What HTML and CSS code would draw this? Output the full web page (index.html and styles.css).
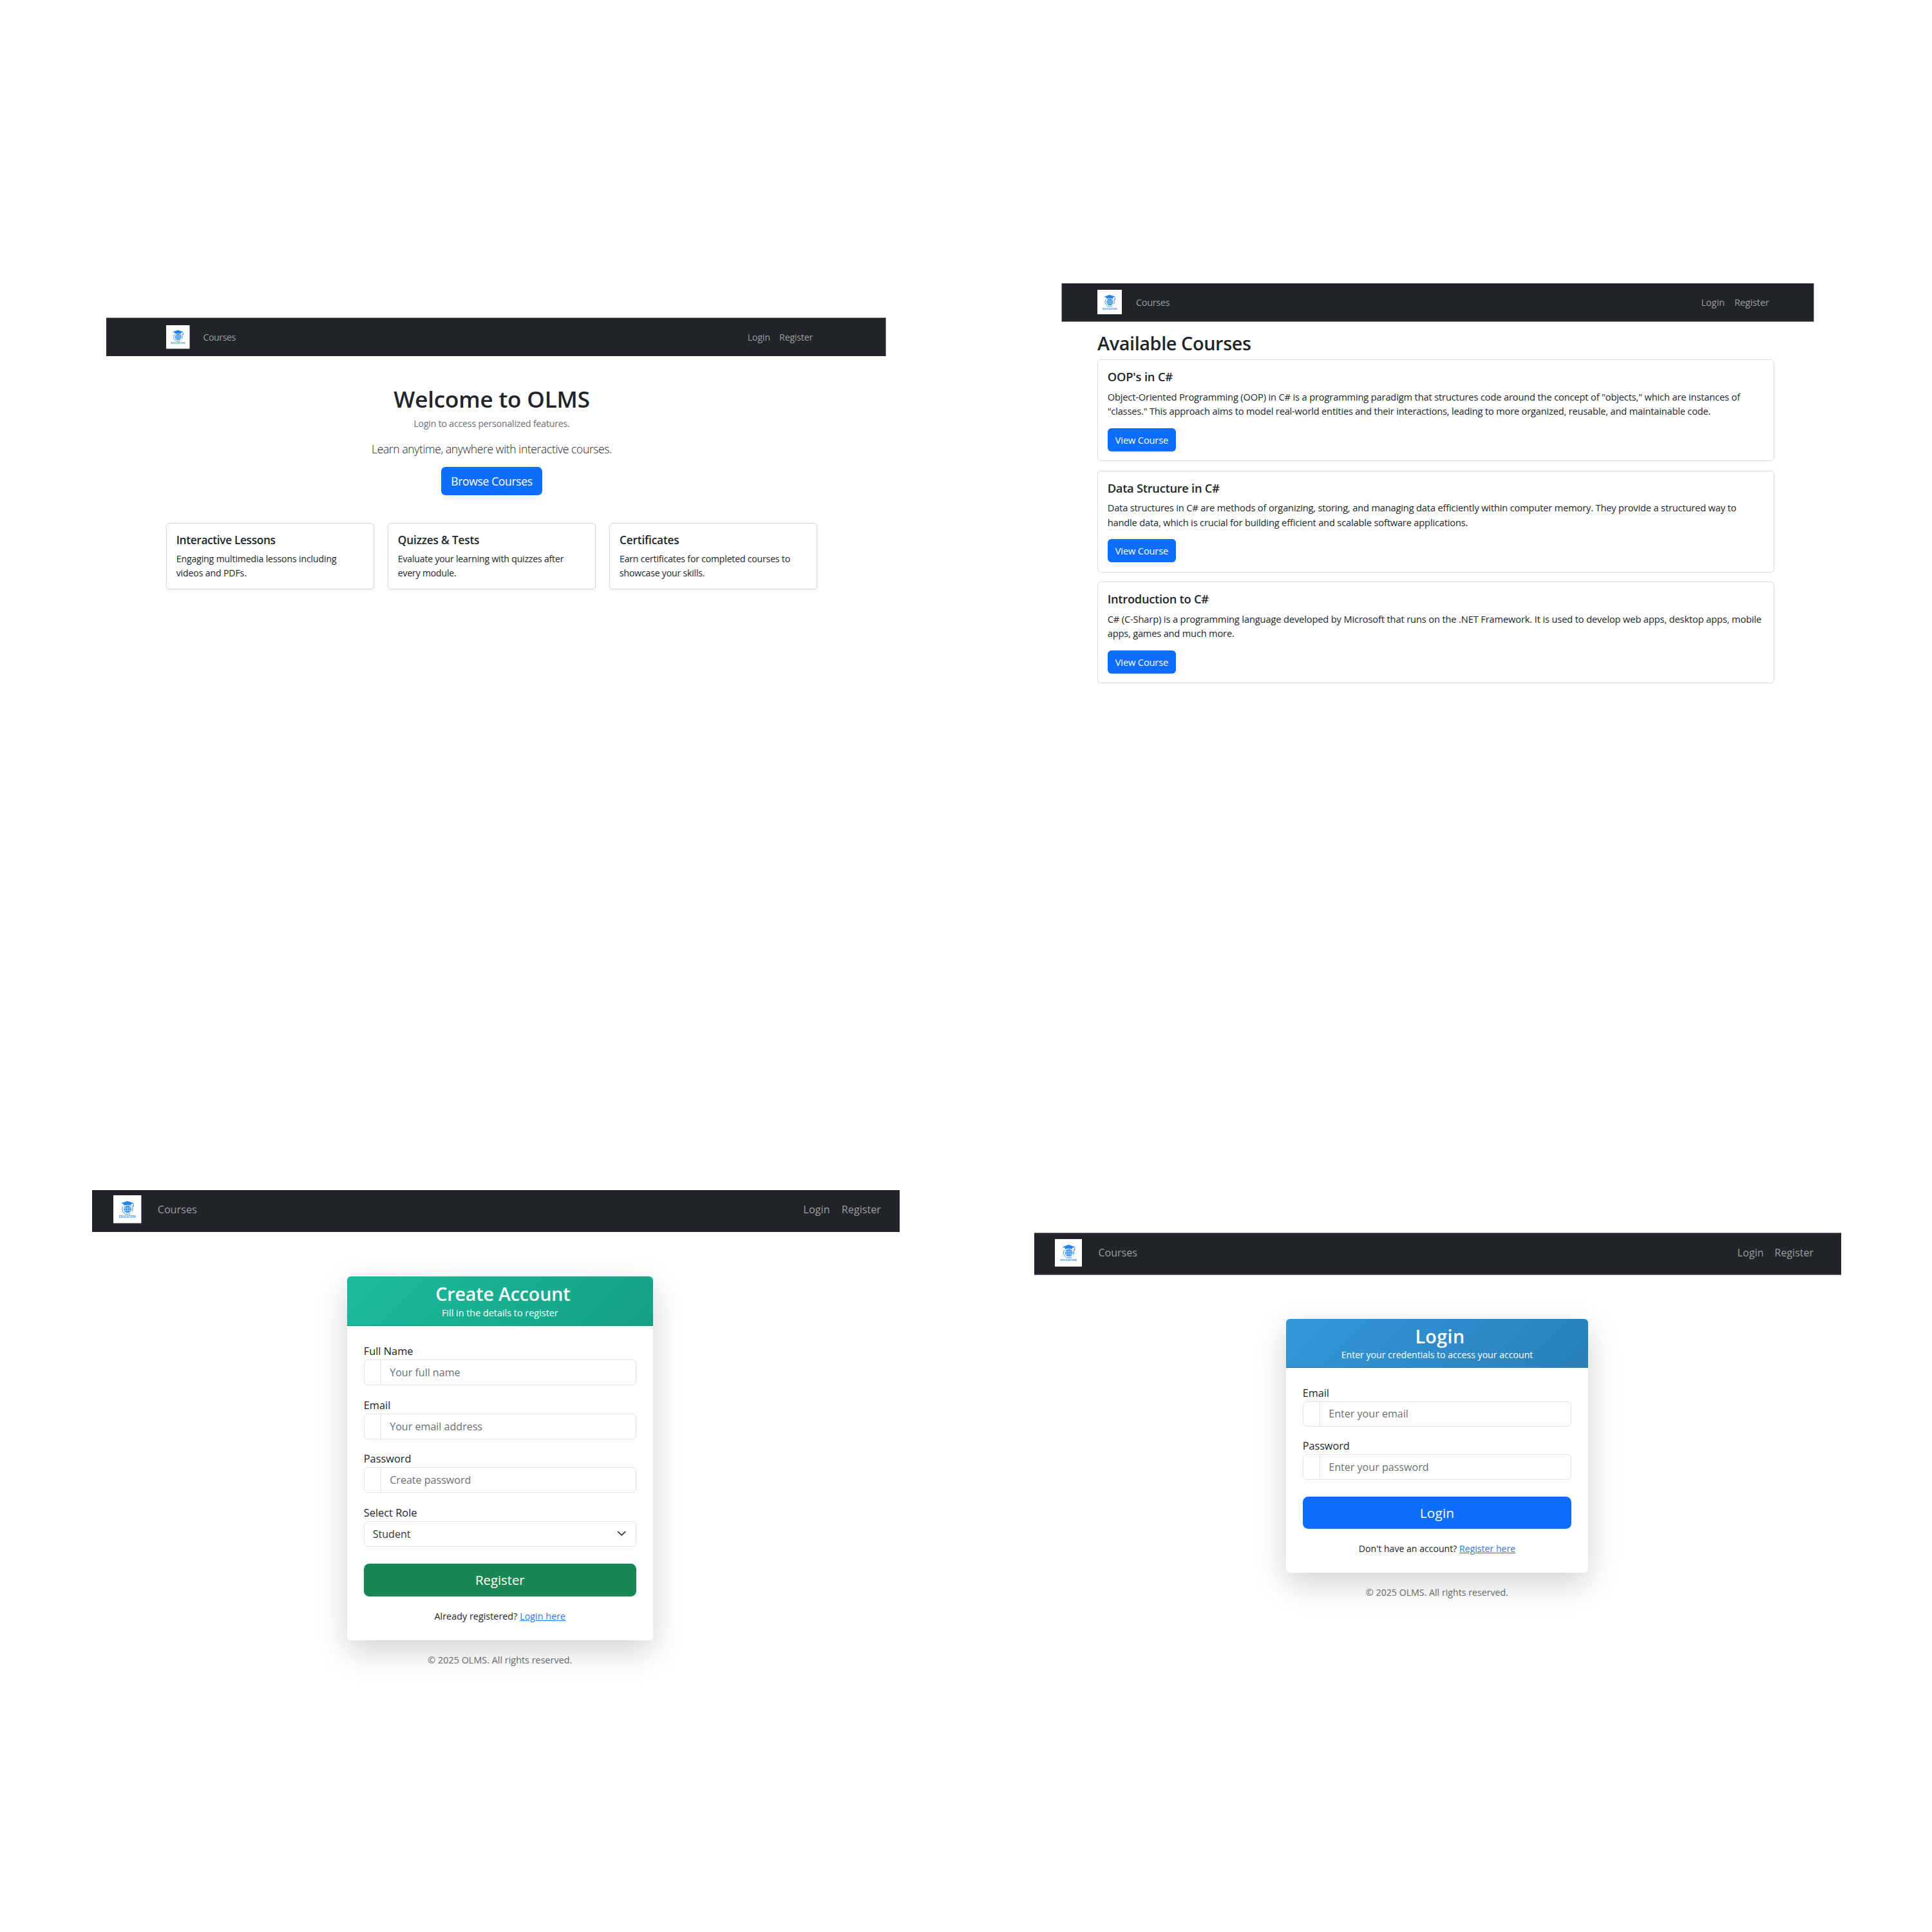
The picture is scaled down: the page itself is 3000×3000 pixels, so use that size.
FILE: index.html
```html
<!DOCTYPE html>
<html lang="en">
<head>
<meta charset="utf-8">
<title>OLMS</title>
<link rel="stylesheet" href="styles.css">
</head>
<body>
<main class="board">
  <section class="screen home">
    <nav class="navbar">
      <svg class="logo" viewBox="0 0 40 40">
        <g id="logo">
          <rect width="40" height="40" fill="#fff"/>
          <g fill="none" stroke="#2483f0">
            <circle cx="20.4" cy="20" r="5.4" fill="#2483f0" stroke="none"/>
            <path d="M20.4 15v10.400M18.100 15.600c-1 3-1 6.500 0 9.300M22.700 15.600c1 3 1 6.500 0 9.300M15 18.500h11M15 21.700h11" stroke="#fff" stroke-width=".55"/>
            <path d="M13.900 15.600c-2.400 4.200-1 9.400 3.400 11.200 3 1.200 5.600.3 7.200-1M26.800 15.800c1.300 2.600 1.200 5.300-.2 7.600" stroke-width=".9"/>
            <path d="M28.800 12v3" stroke-width=".7"/>
          </g>
          <path fill="#2483f0" d="M20 8.200l9.500 3.200-4.300 1.500v2c-3-1.300-7-1.300-10.200 0v-2l-4-1.500zM28.100 14.500h1.400l.2 1.900h-1.800z"/>
          <text x="8" y="32.300" textLength="24" lengthAdjust="spacingAndGlyphs" font-size="4" font-weight="700" fill="#3a90f2">EDUCATION</text>
        </g>
      </svg>
      <a class="nav-courses">Courses</a>
      <a class="nav-login">Login</a>
      <a class="nav-register">Register</a>
    </nav>
    <div class="content">
      <h1>Welcome to OLMS</h1>
      <p class="hint">Login to access personalized features.</p>
      <p class="lead">Learn anytime, anywhere with interactive courses.</p>
      <a class="btn">Browse Courses</a>
      <div class="features">
        <article class="card">
          <h5 class="tight">Interactive Lessons</h5>
          <p class="loose">Engaging multimedia lessons including<br>videos and PDFs.</p>
        </article>
        <article class="card">
          <h5>Quizzes &amp; Tests</h5>
          <p>Evaluate your learning with quizzes after<br>every module.</p>
        </article>
        <article class="card">
          <h5>Certificates</h5>
          <p>Earn certificates for completed courses to<br>showcase your skills.</p>
        </article>
      </div>
    </div>
  </section>

  <section class="screen courses">
    <nav class="navbar">
      <svg class="logo" viewBox="0 0 40 40"><use href="#logo"/></svg>
      <a class="nav-courses">Courses</a>
      <a class="nav-login">Login</a>
      <a class="nav-register">Register</a>
    </nav>
    <div class="content">
      <h2>Available Courses</h2>
      <article class="card">
        <h5 class="loose">OOP's in C#</h5>
        <p>Object-Oriented Programming (OOP) in C# is a programming paradigm that structures code around the concept of "objects," which are instances of<br><span class="tight">"classes." This approach aims to model real-world entities and their interactions, leading to more organized, reusable, and maintainable code.</span></p>
        <a class="btn">View Course</a>
      </article>
      <article class="card">
        <h5>Data Structure in C#</h5>
        <p class="mid">Data structures in C# are methods of organizing, storing, and managing data efficiently within computer memory. They provide a structured way to<br>handle data, which is crucial for building efficient and scalable software applications.</p>
        <a class="btn">View Course</a>
      </article>
      <article class="card">
        <h5>Introduction to C#</h5>
        <p class="loose">C# (C-Sharp) is a programming language developed by Microsoft that runs on the .NET Framework. It is used to develop web apps, desktop apps, mobile<br><span class="tight">apps, games and much more.</span></p>
        <a class="btn">View Course</a>
      </article>
    </div>
  </section>

  <section class="screen register">
    <nav class="navbar">
      <svg class="logo" viewBox="0 0 40 40"><use href="#logo"/></svg>
      <a class="nav-courses">Courses</a>
      <a class="nav-login">Login</a>
      <a class="nav-register">Register</a>
    </nav>
    <div class="form-card">
      <header>
        <h3>Create Account</h3>
        <p>Fill in the details to register</p>
      </header>
      <form>
        <label>Full Name</label>
        <div class="field"><i></i><span>Your full name</span></div>
        <label>Email</label>
        <div class="field"><i></i><span>Your email address</span></div>
        <label>Password</label>
        <div class="field"><i></i><span>Create password</span></div>
        <label>Select Role</label>
        <div class="field select"><span>Student</span>
          <svg class="chevron" viewBox="0 0 16 16"><path d="m2 5 6 6 6-6" fill="none" stroke="#343a40" stroke-width="2" stroke-linecap="round" stroke-linejoin="round"/></svg>
        </div>
        <div class="submit success">Register</div>
        <p class="switch">Already registered? <a>Login here</a></p>
      </form>
    </div>
    <footer>© 2025 OLMS. All rights reserved.</footer>
  </section>

  <section class="screen login">
    <nav class="navbar">
      <svg class="logo" viewBox="0 0 40 40"><use href="#logo"/></svg>
      <a class="nav-courses">Courses</a>
      <a class="nav-login">Login</a>
      <a class="nav-register">Register</a>
    </nav>
    <div class="form-card">
      <header>
        <h3>Login</h3>
        <p>Enter your credentials to access your account</p>
      </header>
      <form>
        <label>Email</label>
        <div class="field"><i></i><span>Enter your email</span></div>
        <label>Password</label>
        <div class="field"><i></i><span>Enter your password</span></div>
        <div class="submit">Login</div>
        <p class="switch">Don't have an account? <a>Register here</a></p>
      </form>
    </div>
    <footer>© 2025 OLMS. All rights reserved.</footer>
  </section>
</main>
</body>
</html>
```
FILE: styles.css
```css
* { box-sizing: border-box; margin: 0; padding: 0; }
body {
  width: 3000px;
  background: #fff;
  color: #212529;
  font-family: "Open Sans", "Noto Sans", sans-serif;
  white-space: nowrap;
}
.board {
  display: grid;
  grid-template-columns: 1500px 1500px;
  grid-template-rows: 1500px 1500px;
}
h1, h2, h3, h5 { font-weight: 600; }

/* Navigation */
.navbar {
  display: flex;
  align-items: center;
  background: #212529;
  color: #9b9d9f;
}
.logo { display: block; flex: none; }
.nav-login { margin-left: auto; }

.card {
  border: 1px solid #d9dadb;
  border-radius: 5.5px;
  background: #fff;
}
.btn {
  display: flex;
  align-items: center;
  justify-content: center;
  background: #0d6efd;
  color: #fff;
}

/* Home */
.home { padding: 493px 124px 0 165px; }
.home .navbar {
  height: 60px;
  padding: 0 113px 0 93px;
  border-top: 1px solid #858789;
  border-right: 1px solid #858789;
  font-size: 14.1px;
}
.home .logo { width: 36.5px; height: 36.5px; }
.home .nav-courses { margin-left: 21px; letter-spacing: -.38px; }
.home .nav-login { letter-spacing: -.05px; margin-right: 14px; }
.home .nav-register { letter-spacing: -.17px; }
.home .content {
  display: flex;
  flex-direction: column;
  align-items: center;
  width: 1011px;
  margin: 45px 0 0 93px;
}
.home h1 { font-size: 35.1px; line-height: 43.4px; letter-spacing: -.2px; }
.hint { margin-top: 5.5px; font-size: 14.1px; line-height: 21.8px; letter-spacing: -.18px; color: #6c7074; }
.lead { margin-top: 15px; font-size: 17.6px; line-height: 27px; font-weight: 300; letter-spacing: -.41px; }
.home .btn {
  width: 157px;
  height: 43.5px;
  margin-top: 14.5px;
  border-radius: 7px;
  font-size: 17.6px;
  letter-spacing: -.38px;
}
.features {
  display: grid;
  grid-template-columns: repeat(3, 1fr);
  gap: 21.5px;
  width: 100%;
  margin-top: 43.3px;
}
.home .card {
  height: 103px;
  padding: 14.7px;
  box-shadow: 0 2px 4px rgba(0, 0, 0, .075);
}
.home h5 { font-size: 17.3px; line-height: 21.7px; letter-spacing: -.2px; }
.home h5.tight { letter-spacing: -.35px; }
.home .card p { margin-top: 7.5px; font-size: 14.1px; line-height: 21.7px; letter-spacing: -.2px; }
.home .card p.loose { letter-spacing: -.13px; }

/* Courses */
.courses { padding: 440px 183px 0 148px; }
.courses .navbar {
  height: 60px;
  padding: 0 69px 1px 55px;
  border: solid #9a9b9d;
  border-width: 0 1px 1px;
  font-size: 14.5px;
}
.courses .logo { width: 38px; height: 38px; }
.courses .nav-courses { margin-left: 22px; letter-spacing: -.35px; }
.courses .nav-login { letter-spacing: 0; margin-right: 15px; }
.courses .nav-register { letter-spacing: -.12px; }
.courses .content {
  display: flex;
  flex-direction: column;
  gap: 14.8px;
  width: 1051px;
  margin: 15.3px 0 0 56px;
}
.courses h2 { margin-bottom: -8.2px; font-size: 28.8px; line-height: 36.3px; letter-spacing: -.38px; }
.courses .card { height: 157.8px; padding: 15px 14.7px 0; }
.courses h5 { font-size: 18.3px; line-height: 22.7px; letter-spacing: -.27px; }
.courses h5.loose { letter-spacing: -.15px; }
.courses .card p { margin-top: 7.6px; font-size: 14.65px; line-height: 22.7px; letter-spacing: -.15px; }
.courses .card p.mid { letter-spacing: -.168px; }
.courses .card p.loose { letter-spacing: -.135px; }
.courses .card .tight { letter-spacing: -.192px; }
.courses .btn {
  width: 106.5px;
  height: 36px;
  margin-top: 14.6px;
  border-radius: 5.7px;
  font-size: 14.65px;
  letter-spacing: -.15px;
}

/* Forms */
.form-card {
  border-radius: 6px;
  background: #fff;
  box-shadow: 0 17px 50px rgba(0, 0, 0, .175);
}
.form-card header {
  border-radius: 6px 6px 0 0;
  color: #fff;
  text-align: center;
}
.form-card h3 { padding-left: 9px; }
label { display: block; }
.field {
  display: flex;
  align-items: center;
  border: 1px solid #dee2e6;
  border-radius: 6.3px;
  color: #6b6f73;
}
.field i { align-self: stretch; width: 26.5px; border-right: 1px solid #dee2e6; }
.field span { padding-left: 13px; }
.select { justify-content: space-between; color: #33373b; }
.chevron { width: 14.5px; height: 14.5px; margin-right: 14.5px; }
.submit {
  display: flex;
  align-items: center;
  justify-content: center;
  border-radius: 8.3px;
  background: #0d6efd;
  color: #fff;
}
.submit.success { background: #198754; }
.switch { text-align: center; }
.switch a { color: #2f78e8; text-decoration: underline; }
footer { text-align: center; color: #65686b; }

/* Register */
.register { padding: 348px 103px 0 143px; }
.register .navbar {
  height: 65px;
  padding: 0 29px 5px 33.3px;
  font-size: 16.2px;
}
.register .logo { width: 43.4px; height: 43.4px; }
.register .nav-courses { margin-left: 25px; }
.register .nav-login { margin-right: 18px; letter-spacing: .1px; }
.register .form-card { width: 475.3px; margin: 68.6px 0 0 395.7px; }
.register header {
  height: 77.7px;
  padding-top: 9.7px;
  border-bottom: 1px solid #178a74;
  background: linear-gradient(135deg, #1abc9c, #16a085);
}
.register h3 { font-size: 28.6px; line-height: 35px; letter-spacing: -.15px; }
.register header p { margin-top: 1.8px; font-size: 14.4px; line-height: 22px; }
.register form { padding: 25.9px 26px 26.1px; }
.register label { margin-bottom: .6px; font-size: 16.4px; line-height: 25.3px; }
.register .field { height: 40px; margin-bottom: 17.6px; font-size: 16.2px; letter-spacing: -.06px; }
.register .select { margin-bottom: 0; }
.register .submit { height: 50.5px; margin-top: 26.5px; font-size: 20.5px; letter-spacing: -.1px; }
.register .switch { margin-top: 20.3px; font-size: 14.4px; line-height: 22px; }
.register footer { width: 475.3px; margin: 20.3px 0 0 395.7px; font-size: 14.4px; line-height: 22px; }

/* Login */
.login { padding: 414px 141px 0 106px; }
.login .navbar {
  height: 66px;
  padding: 0 43px 3px 31.8px;
  border: solid #77797c;
  border-width: 1px 0;
  font-size: 16px;
}
.login .navbar a { margin-top: -1px; }
.login .logo { width: 42.7px; height: 42.7px; }
.login .nav-courses { margin-left: 25px; }
.login .nav-login { margin-right: 16.8px; letter-spacing: .1px; }
.login .form-card { width: 469px; margin: 67.7px 0 0 391px; }
.login header {
  height: 76.7px;
  padding-top: 10px;
  border-bottom: 1px solid #2773a8;
  background: linear-gradient(135deg, #3498db, #2980b9);
}
.login h3 { font-size: 28.7px; line-height: 34.6px; letter-spacing: .4px; }
.login header p { margin-top: 1.1px; font-size: 14.1px; line-height: 21.6px; }
.login form { padding: 26.3px 25.7px 26px; }
.login label { font-size: 16.2px; line-height: 25.1px; }
.login .field { height: 39.4px; margin-bottom: 18px; font-size: 16.1px; }
.login .submit { height: 50px; margin-top: 26.3px; font-size: 20.8px; letter-spacing: .2px; }
.login .switch { margin-top: 20.3px; font-size: 14.1px; line-height: 21.6px; }
.login footer { width: 469px; margin: 20.3px 0 0 391px; font-size: 14.2px; line-height: 21.6px; }
```
